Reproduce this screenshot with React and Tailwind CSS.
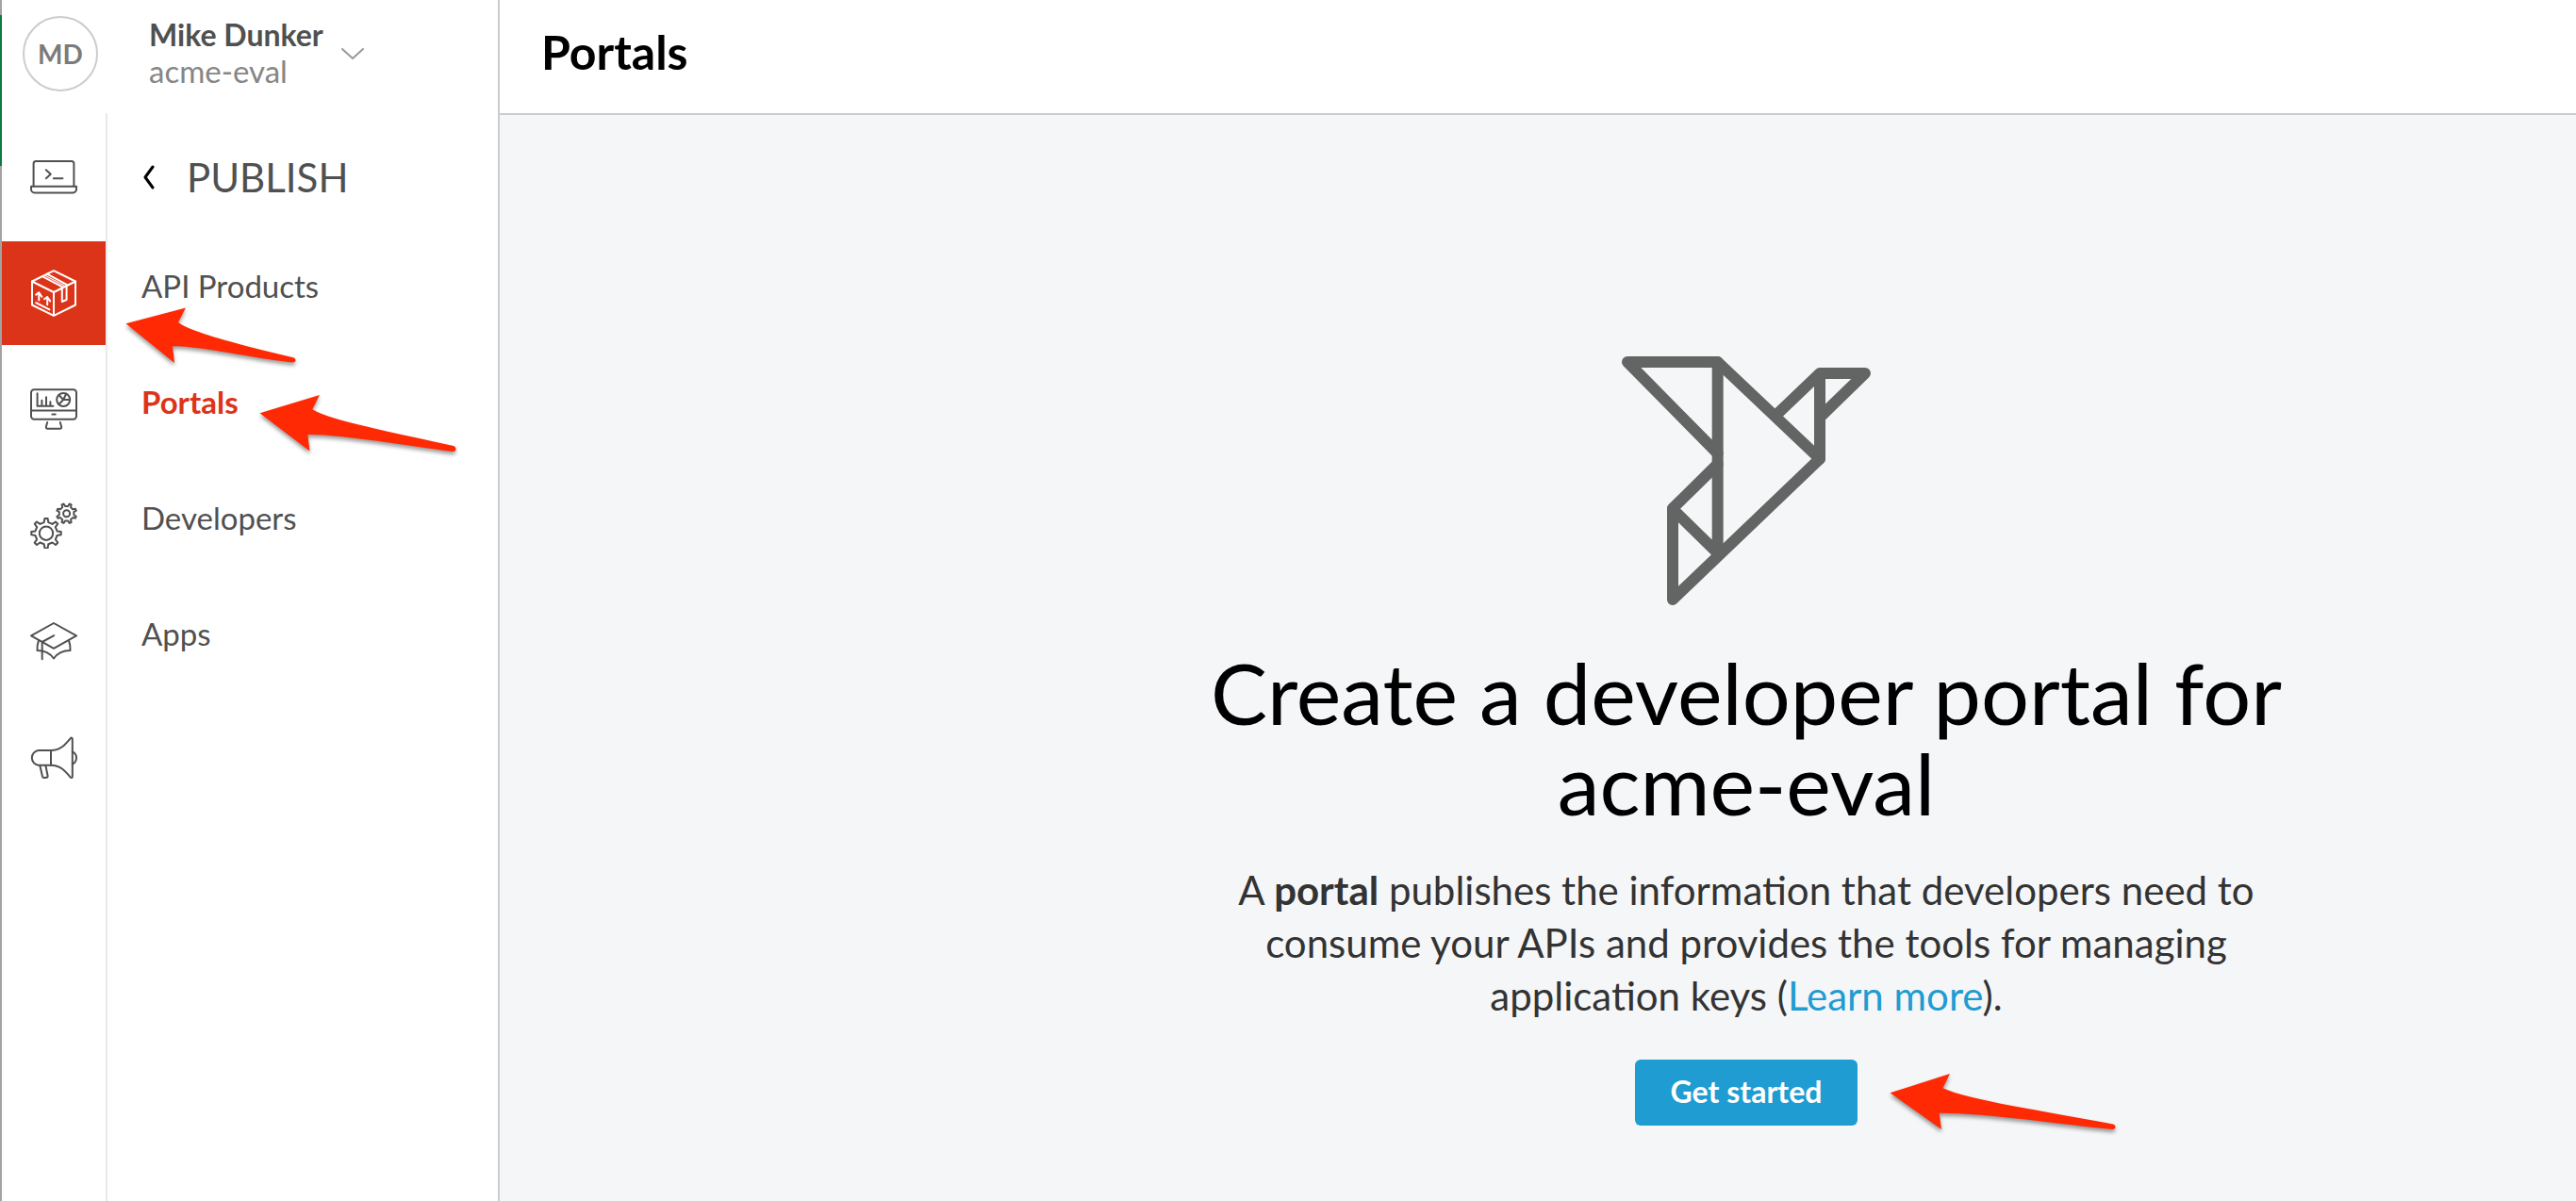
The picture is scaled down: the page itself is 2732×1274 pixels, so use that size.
const ICON = {
  fill: "none",
  stroke: "currentColor",
  strokeLinecap: "round",
  strokeLinejoin: "round",
  viewBox: "0 0 50 50",
  className: "size-[50px]",
  "aria-hidden": true,
};

function gearPath(cx, cy, outer, root, teeth, turn) {
  const step = (Math.PI * 2) / teeth;
  const at = (r, a) =>
    `${(cx + r * Math.cos(a)).toFixed(2)} ${(cy + r * Math.sin(a)).toFixed(2)}`;
  let d = "";
  for (let i = 0; i < teeth; i++) {
    const a = turn + i * step;
    d += `${i ? "L" : "M"}${at(root, a - step * 0.25)}`;
    d += `L${at(outer, a - step * 0.13)}L${at(outer, a + step * 0.13)}`;
    d += `L${at(root, a + step * 0.25)}`;
  }
  return d + "Z";
}

function LaptopIcon() {
  return (
    <svg {...ICON} strokeWidth="2">
      <path d="M3.6 34.5V10.5a2.5 2.5 0 0 1 2.5-2.5h37.8a2.5 2.5 0 0 1 2.5 2.5v24" />
      <path d="M1 34.8h48v3a3.6 3.6 0 0 1-3.6 3.6H4.6A3.6 3.6 0 0 1 1 37.8z" />
      <path d="M16.8 17.2l5 4.5-5 4.5M24.8 26.3h9.6" />
    </svg>
  );
}

function BoxIcon() {
  return (
    <svg {...ICON} strokeWidth="2">
      <path d="M25 1.2L48 12.5v25L25 48.8 2 37.5v-25z" />
      <path d="M2 12.5L25 24l23-11.5M25 24v24.6" />
      <path d="M12.8 7.2l21 11V34l4.8-2V15.8L18 4.6" />
      <path d="M15.4 6l20.4 10.8" strokeWidth="1.2" />
      <path d="M9.3 32.5V24.4M6.2 26.6l3.1-2.2 3 4.4M18.2 37.3v-8.2M15 31.2l3.2-2.2 3 4.4M6.2 35.2l14.2 7.2" />
    </svg>
  );
}

function MonitorIcon() {
  return (
    <svg {...ICON} strokeWidth="2">
      <rect x="1" y="4.2" width="48" height="31.6" rx="3.2" />
      <path d="M1 26.5h48M23.4 30.4h3.4M18.2 39l-1.3 4.6c-.3 1.4.3 2.1 1.6 2.1h13c1.3 0 1.9-.7 1.6-2.1L31.8 39" />
      <path d="M7.6 8.2v13.5h16.8M12.4 21v-5.2M17 21v-8.8M21.4 21v-3.8" />
      <circle cx="35.2" cy="15" r="7" />
      <path d="M42 15h-6.8l-4.8 5M35.2 15l-4.7-5M35.2 15l3-6.3" />
    </svg>
  );
}

function GearsIcon() {
  return (
    <svg {...ICON} strokeWidth="2">
      <path d={gearPath(17, 33.7, 15.8, 11.8, 8, 0)} />
      <circle cx="17" cy="33.7" r="7.2" />
      <path d={gearPath(38.6, 12.7, 10.6, 7.9, 8, Math.PI / 8)} />
      <circle cx="38.6" cy="12.7" r="3.5" />
    </svg>
  );
}

function CapIcon() {
  return (
    <svg {...ICON} strokeWidth="2">
      <path d="M25 6L1 19.300l24 13.500 24-13.500z" />
      <path d="M25.3 19.2L12.7 26v18.3" />
      <path d="M9 24.4Q7.3 29 7.5 35 19 35 25 43.5 31 35 42.5 35 42.7 29 41 24.4" />
    </svg>
  );
}

function MegaphoneIcon() {
  return (
    <svg {...ICON} strokeWidth="2">
      <path d="M22 18H8.800a7.900 7.900 0 0 0 0 15.700H22z" />
      <path d="M22 18C32 18 37 12 42.600 5.400 43.700 4.200 44.800 4.400 44.800 6v39.800c0 1.400-1.200 1.700-2.200.6C37 39.700 32 33.700 22 33.700" />
      <path d="M44.800 19.300c5.600 2.700 5.600 10.500 0 13.200M10.300 34l2.700 11.600c.3 1 .9 1.400 1.900 1.300l2.500-.2c1-.1 1.400-.7 1.200-1.700L16.400 34" />
    </svg>
  );
}

function BirdLogo() {
  return (
    <svg
      viewBox="60 54 792 792"
      className="size-66 text-[#636564]"
      fill="none"
      stroke="currentColor"
      strokeWidth="36"
      strokeLinecap="round"
      strokeLinejoin="round"
      aria-hidden="true"
    >
      <path d="M365 363L78 72h287l325 308-468 448V538l143-141" />
      <path d="M365 72v608M222 540l143 140" />
      <path d="M552 240l138-132h144L694 244M690 108v272" />
    </svg>
  );
}

function Arrow({ viewBox, d, className }) {
  return (
    <svg
      viewBox={viewBox}
      className={`pointer-events-none absolute z-10 overflow-visible text-[#ff2a04] drop-shadow-[0_3px_2px_rgba(0,0,0,0.4)] ${className}`}
      aria-hidden="true"
    >
      <path d={d} fill="currentColor" />
    </svg>
  );
}

const SECTIONS = [
  { label: "Develop", Icon: LaptopIcon },
  { label: "Publish", Icon: BoxIcon, active: true },
  { label: "Analyze", Icon: MonitorIcon },
  { label: "Admin", Icon: GearsIcon },
  { label: "Learn", Icon: CapIcon },
  { label: "Announcements", Icon: MegaphoneIcon },
];

function IconRail() {
  return (
    <nav
      aria-label="Sections"
      className="flex w-28 shrink-0 flex-col gap-[13px] border-r-2 border-[#e9e9e9] pt-[13px]"
    >
      {SECTIONS.map(({ label, Icon, active }) => (
        <a
          key={label}
          href="#"
          aria-label={label}
          className={`flex h-[110px] items-center justify-center ${
            active ? "bg-[#dc3419] text-white" : "text-[#505050]"
          }`}
        >
          <Icon />
        </a>
      ))}
    </nav>
  );
}

function SubMenu() {
  return (
    <nav aria-label="Publish" className="flex-1 pt-[6px] pl-9 text-[33px] leading-10 text-[#505050]">
      <button type="button" className="flex h-[123px] items-center gap-8 text-[42px] leading-12">
        <svg
          viewBox="0 0 16 26"
          className="h-[26px] w-4 text-black"
          fill="none"
          stroke="currentColor"
          strokeWidth="3"
          strokeLinecap="round"
          strokeLinejoin="round"
          aria-hidden="true"
        >
          <path d="M12 2L4 13l8 11" />
        </svg>
        PUBLISH
      </button>
      <ul>
        <li className="relative flex h-[123px] items-center pb-4">
          <a href="#">API Products</a>
          <Arrow
            viewBox="132 326 182 62"
            className="top-[77px] left-[-17px] w-[182px]"
            d="M132.500 343.300L196 326.500 188 342C203 353 255 366 310 379.300 314 380.500 313 385 309 384.500 262 379 205 366 182 367.300L184 385z"
          />
        </li>
        <li className="relative flex h-[123px] items-center pb-4">
          <a href="#" aria-current="page" className="font-bold text-[#dc3419]">
            Portals
          </a>
          <Arrow
            viewBox="274 419 210 62"
            className="top-[47px] left-[125px] w-[210px]"
            d="M274.500 438.300L338 419 330.300 434.300C350 446 412 458 480 473 484 474.500 483 479.500 479 479 432 473 355 460 325.400 461L327.500 478.500z"
          />
        </li>
        <li className="flex h-[123px] items-center pb-4">
          <a href="#">Developers</a>
        </li>
        <li className="flex h-[123px] items-center pb-4">
          <a href="#">Apps</a>
        </li>
      </ul>
    </nav>
  );
}

export default function App() {
  return (
    <div className="flex min-h-screen bg-white font-['Lato',sans-serif]">
      <div className="flex w-[2px] shrink-0 flex-col bg-[#a3a3a3] pt-4">
        <div className="h-40 bg-[#0b7a43]" />
      </div>

      <aside className="flex w-[528px] shrink-0 flex-col border-r-2 border-[#cccccc]">
        <button type="button" className="flex h-[120px] items-start pl-[22px] text-left">
          <span className="mt-[17px] flex size-20 items-center justify-center rounded-full border-2 border-[#cccccc] text-[28px] font-bold text-[#7b7b7b]">
            MD
          </span>
          <span className="mt-[18px] ml-[54px] flex flex-col leading-[38px]">
            <span className="text-[32px] font-bold text-[#505050]">Mike Dunker</span>
            <span className="text-[33px] text-[#868686]">acme-eval</span>
          </span>
          <svg
            viewBox="0 0 26 14"
            className="mt-[50px] ml-[18px] h-[14px] w-[26px] text-[#999999]"
            fill="none"
            stroke="currentColor"
            strokeWidth="2"
            strokeLinecap="round"
            strokeLinejoin="round"
            aria-hidden="true"
          >
            <path d="M2 2l11 10L24 2" />
          </svg>
        </button>
        <div className="flex flex-1">
          <IconRail />
          <SubMenu />
        </div>
      </aside>

      <div className="flex min-w-0 flex-1 flex-col">
        <header className="flex h-[122px] items-start border-b-2 border-[#cccccc] pt-[26px] pl-11">
          <h1 className="text-[50px] leading-[58px] font-bold text-black">Portals</h1>
        </header>
        <main className="flex flex-1 flex-col items-center bg-[#f5f6f8] pt-64 pl-[442px]">
          <BirdLogo />
          <div className="max-w-[1180px] text-center">
            <h2 className="mt-11 text-[90px] leading-24 text-black">
              Create a developer portal for acme-eval
            </h2>
            <p className="mt-[38px] text-[42px] leading-14 text-[#333333]">
              A <strong className="font-bold">portal</strong> publishes the information that developers
              need to consume your APIs and provides the tools for managing application keys (
              <a href="#" className="text-[#1f9cd1]">
                Learn more
              </a>
              ).
            </p>
          </div>
          <div className="relative mt-10">
            <button
              type="button"
              className="h-[70px] w-[236px] rounded-md bg-[#1f9cd1] pb-[2px] text-[32px] font-bold text-white"
            >
              Get started
            </button>
            <Arrow
              viewBox="2004 1139 240 62"
              className="top-[15px] left-[270px] w-[240px]"
              d="M2004.500 1159.300L2068 1139 2060.500 1154.300C2088 1167 2165 1178 2241 1192.500 2245 1194 2244 1198.500 2240 1198 2190 1193 2100 1180 2056.700 1180.700L2059 1198z"
            />
          </div>
        </main>
      </div>
    </div>
  );
}
